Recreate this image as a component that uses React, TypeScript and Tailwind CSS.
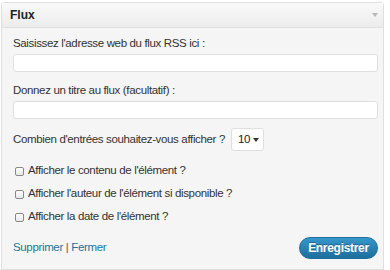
const font = { fontFamily: '"Liberation Sans", Arial, sans-serif' };

function Check({ label }: { label: string }) {
  return (
    <label className="h-[16px] flex items-center text-[11.5px] tracking-[-0.35px] text-[#333]">
      <span className="ml-[2px] mr-[4px] w-[9px] h-[9px] rounded-[2px] border border-[#888] bg-gradient-to-b from-white to-[#e8e8e8] shrink-0" />
      {label}
    </label>
  );
}

export default function App() {
  return (
    <div className="w-[390px] h-[270px] bg-white pt-[2px] pl-[1px]" style={font}>
      <div className="w-[383px] h-[268px] border border-[#dfdfdf] rounded-t-[3px] bg-[#f5f5f5]">
        <div className="h-[25px] flex items-center justify-between pl-[8px] pr-[5px] bg-gradient-to-b from-[#f9f9f9] to-[#ececec] border-b border-[#dfdfdf]">
          <span className="text-[12px] font-bold text-[#222]">Flux</span>
          <span className="w-0 h-0 border-l-[3px] border-r-[3px] border-t-[4px] border-l-transparent border-r-transparent border-t-[#b8b8b8]" />
        </div>
        <div className="pl-[11px] pr-[5px] pt-[7px] text-[11.5px] tracking-[-0.35px] text-[#333]">
          <div className="leading-[16px]">Saisissez l'adresse web du flux RSS ici :</div>
          <div className="mt-[3px] h-[18px] bg-white border border-[#dfdfdf] rounded-[3px]" />
          <div className="mt-[10px] leading-[16px]">Donnez un titre au flux (facultatif) :</div>
          <div className="mt-[3px] h-[18px] bg-white border border-[#dfdfdf] rounded-[3px]" />
          <div className="mt-[9px] flex items-center gap-[6px]">
            <span>Combien d'entrées souhaitez-vous afficher ?</span>
            <span className="h-[23px] w-[33px] flex items-center justify-between pl-[6px] pr-[4px] bg-white border border-[#dfdfdf] rounded-[3px]">
              <span className="text-[#222]">10</span>
              <span className="w-0 h-0 border-l-[3px] border-r-[3px] border-t-[4px] border-l-transparent border-r-transparent border-t-[#333]" />
            </span>
          </div>
          <div className="mt-[12px] flex flex-col gap-[7px]">
            <Check label="Afficher le contenu de l'élément ?" />
            <Check label="Afficher l'auteur de l'élément si disponible ?" />
            <Check label="Afficher la date de l'élément ?" />
          </div>
          <div className="mt-[12px] flex items-center justify-between">
            <div>
              <a className="text-[#21759b]">Supprimer</a>
              <span className="text-[#9d3c2b]"> | </span>
              <a className="text-[#21759b]">Fermer</a>
            </div>
            <button className="h-[22px] w-[79px] rounded-full bg-gradient-to-b from-[#3597cc] to-[#1d6e9c] border border-[#1f6f9b] text-white text-[12px] font-bold tracking-[-0.3px] [text-shadow:0_-1px_0_rgba(0,0,0,0.3)]">
              Enregistrer
            </button>
          </div>
        </div>
      </div>
    </div>
  );
}
